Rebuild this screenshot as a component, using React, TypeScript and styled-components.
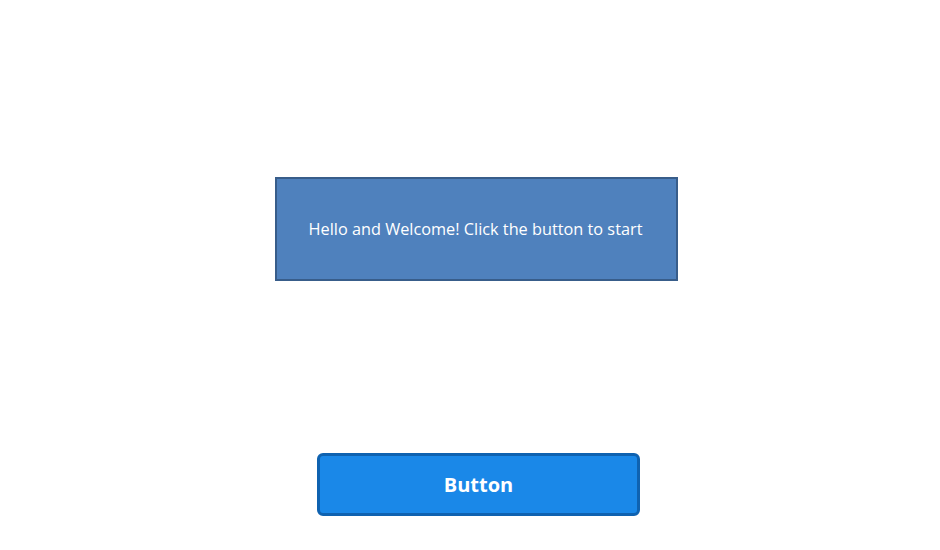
import React from "react";
import styled, { createGlobalStyle } from "styled-components";

const Global = createGlobalStyle`
  html, body { margin: 0; padding: 0; background: #ffffff; }
  body { font-family: "Open Sans", "Noto Sans", sans-serif; }
`;

const Stage = styled.div`
  width: 940px;
  height: 550px;
  box-sizing: border-box;
  padding: 177px 0 0 275px;
  display: flex;
  flex-direction: column;
  align-items: flex-start;
  gap: 172px;
`;

const Banner = styled.div`
  box-sizing: border-box;
  width: 403px;
  height: 104px;
  background: #4f81bd;
  border: 2px solid #385d8a;
  display: flex;
  align-items: center;
  justify-content: center;
  color: #ffffff;
  font-size: 16.3px;
  padding-right: 2px;
`;

const ActionButton = styled.button`
  box-sizing: border-box;
  margin-left: 42px;
  width: 323px;
  height: 63px;
  background: #1a88e8;
  border: 3px solid #0f62b0;
  border-radius: 6px;
  color: #ffffff;
  font-family: "Open Sans", "Noto Sans", sans-serif;
  font-weight: 700;
  font-size: 20px;
  display: flex;
  align-items: center;
  justify-content: center;
  padding: 0;
  cursor: pointer;
`;

export default function App() {
  return (
    <>
      <Global />
      <Stage>
        <Banner>Hello and Welcome! Click the button to start</Banner>
        <ActionButton>Button</ActionButton>
      </Stage>
    </>
  );
}
